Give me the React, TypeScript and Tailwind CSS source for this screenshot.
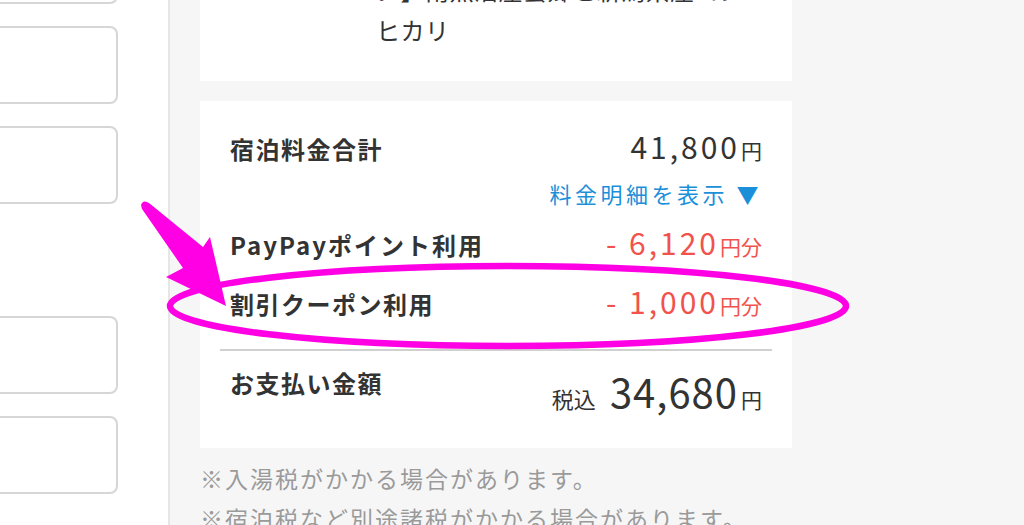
import React from "react";

const font = { fontFamily: '"Noto Sans CJK JP", "Noto Sans", sans-serif' };

function InputBox() {
  return (
    <div className="h-[78px] w-[160px] shrink-0 rounded-[8px] border-2 border-[#d6d6d6] bg-white" />
  );
}

function Amount({
  value,
  unit,
  red,
}: {
  value: string;
  unit: string;
  red?: boolean;
}) {
  return (
    <div
      className={
        red
          ? "flex items-baseline text-[#f2524c]"
          : "flex items-baseline text-[#333333]"
      }
    >
      <span className="text-[30px] leading-[32px] tracking-[3px]">{value}</span>
      <span className="ml-[1px] text-[21px] leading-[32px]">{unit}</span>
    </div>
  );
}

export default function App() {
  return (
    <div
      className="relative flex h-[525px] w-[1024px] overflow-hidden bg-[#f6f6f6]"
      style={font}
    >
      {/* left form column */}
      <div className="flex h-full w-[170px] shrink-0 flex-col items-end overflow-hidden border-r-2 border-[#e6e6e6] bg-white pr-[50px]">
        <div className="mt-[-74px] flex flex-col gap-[22px]">
          <InputBox />
          <InputBox />
          <InputBox />
        </div>
        <div className="mt-[112px] flex flex-col gap-[22px]">
          <InputBox />
          <InputBox />
        </div>
      </div>

      {/* summary column */}
      <div className="ml-[30px] flex w-[592px] shrink-0 flex-col">
        <div className="mt-[-30px] shrink-0 bg-white pb-[31px] pl-[176px] pr-[20px]">
          <p className="text-[24px] leading-[40px] tracking-[0.5px] text-[#333333]">
            ン】南魚沼産雲郷と新潟県産コシ
            <br />
            ヒカリ
          </p>
        </div>

        <div className="mt-[20px] h-[347px] shrink-0 bg-white px-[20px] pt-[29px]">
          <div className="flex items-baseline justify-between px-[10px]">
            <span className="text-[24px] font-bold leading-[32px] tracking-[1.5px] text-[#333333]">
              宿泊料金合計
            </span>
            <Amount value="41,800" unit="円" />
          </div>
          <div className="mt-[12px] px-[10px] text-right text-[22px] leading-[30px] tracking-[3.5px] text-[#1b8fd9]">
            料金明細を表示 ▼
          </div>
          <div className="mt-[18px] flex items-baseline justify-between px-[10px]">
            <span className="text-[24px] font-bold leading-[32px] tracking-[2px] text-[#333333]">
              PayPayポイント利用
            </span>
            <Amount value="- 6,120" unit="円分" red />
          </div>
          <div className="mt-[23px] flex items-baseline justify-between px-[10px]">
            <span className="text-[24px] font-bold leading-[32px] tracking-[1.5px] text-[#333333]">
              割引クーポン利用
            </span>
            <Amount value="- 1,000" unit="円分" red />
          </div>
          <div className="mt-[28px] h-[2px] bg-[#d0d0d0]" />
          <div className="mt-[16px] flex items-start justify-between px-[10px]">
            <span className="text-[24px] font-bold leading-[32px] tracking-[1.5px] text-[#333333]">
              お支払い金額
            </span>
            <div className="mt-[2px] flex items-baseline text-[#333333]">
              <span className="mr-[14px] text-[22px] leading-[44px]">税込</span>
              <span className="text-[40px] leading-[44px] tracking-[1px]">34,680</span>
              <span className="ml-[3px] text-[21px] leading-[44px]">円</span>
            </div>
          </div>
        </div>

        <div className="mt-[10px] shrink-0 text-[23px] leading-[40px] tracking-[2px] text-[#9a9a9a]">
          <p>※入湯税がかかる場合があります。</p>
          <p className="whitespace-nowrap">※宿泊税など別途諸税がかかる場合があります。</p>
        </div>
      </div>

      {/* annotation overlay */}
      <svg
        className="pointer-events-none absolute left-0 top-0"
        width="1024"
        height="525"
        viewBox="0 0 1024 525"
      >
        <ellipse
          cx="508"
          cy="306"
          rx="338"
          ry="40"
          fill="none"
          stroke="#ff00e4"
          strokeWidth="6.5"
        />
        <path
          d="M141 205 Q143 199 149 203 L203 247 L210 237 L226 306 L166 277 L183 268 L142 209 Z"
          fill="#ff00e4"
        />
      </svg>
    </div>
  );
}
